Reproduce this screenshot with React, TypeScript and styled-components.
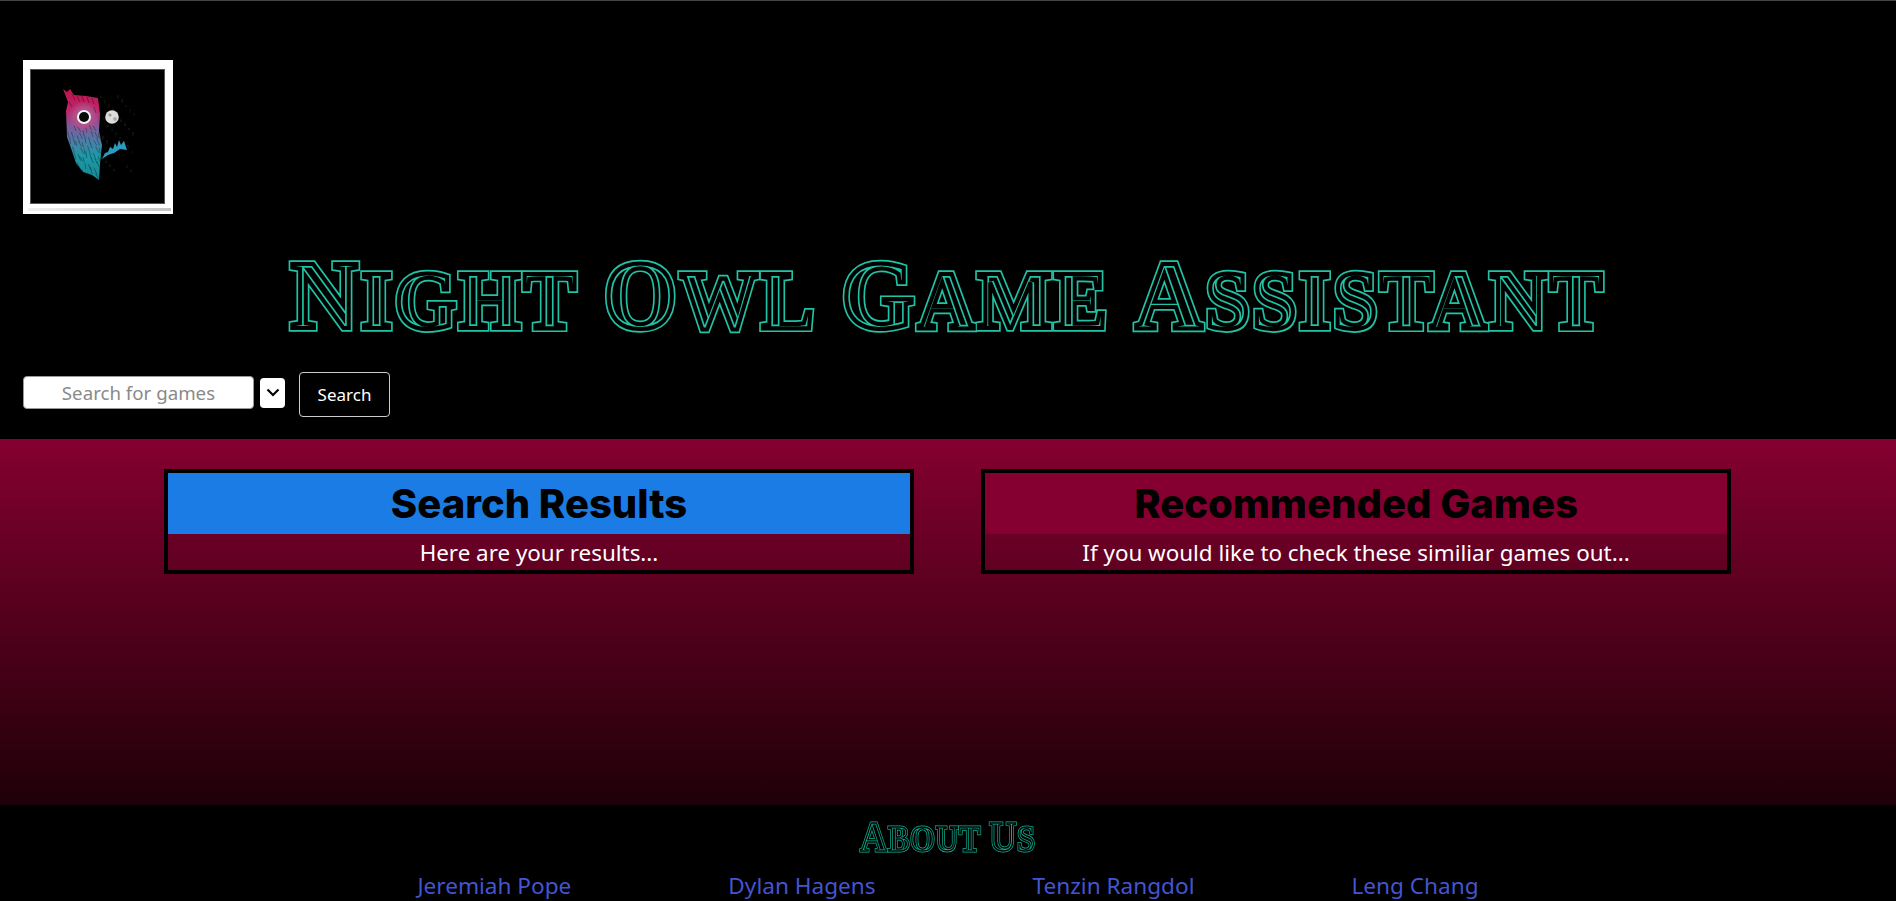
import React from 'react';
import styled, { createGlobalStyle } from 'styled-components';

const GlobalStyle = createGlobalStyle`
  html, body {
    margin: 0;
    padding: 0;
    height: 901px;
    overflow: hidden;
    background: #000;
    font-family: "Noto Sans", "Open Sans", sans-serif;
  }
`;

const Page = styled.div`
  display: flex;
  flex-direction: column;
  height: 901px;
`;

const Header = styled.header`
  height: 439px;
  box-sizing: border-box;
  background: #000;
  border-top: 1px solid #444;
  padding: 59px 23px 0;
`;

const Logo = styled.div`
  position: relative;
  width: 150px;
  height: 154px;
  box-sizing: border-box;
  background: #000;
  border-style: solid;
  border-color: #fff;
  border-width: 9px 8px 10px 7px;
  box-shadow: inset 0 0 0 1px #555;
  svg {
    display: block;
    width: 135px;
    height: 135px;
    filter: blur(0.45px);
  }
  &::after {
    content: '';
    position: absolute;
    left: -2px;
    right: -6px;
    bottom: -7px;
    height: 3px;
    background: linear-gradient(90deg, #f0f0f0, #c4c4c4);
  }
`;

const Title = styled.h1`
  --outer: 7.6px;
  --inner: 4.2px;
  margin: 36px 0 0;
  height: 98px;
  display: flex;
  justify-content: center;
  align-items: flex-end;
  gap: 26px;
  font: 700 82px/94px "Liberation Serif", serif;
  letter-spacing: 3.5px;
  color: #22c2a6;
  transform: scaleX(0.955);
`;

const AboutTitle = styled.h2`
  --outer: 3px;
  --inner: 1.5px;
  margin: 0;
  height: 44px;
  display: flex;
  justify-content: center;
  align-items: flex-end;
  gap: 9px;
  font: 700 35px/43px "Liberation Serif", serif;
  letter-spacing: 1px;
  color: #10b092;
  transform: scaleX(0.9);
`;

const Word = styled.span`
  display: inline-flex;
  align-items: baseline;
`;

const Glyphs = styled.span<{ $big?: boolean }>`
  position: relative;
  display: inline-block;
  font-size: ${(p) => (p.$big ? '1.19em' : '1em')};
  text-transform: uppercase;
  white-space: pre;
  -webkit-text-fill-color: #000;
  -webkit-text-stroke: var(--outer) currentColor;
  &::before {
    content: attr(data-text);
    position: absolute;
    left: 0;
    top: 0;
    -webkit-text-fill-color: transparent;
    -webkit-text-stroke: var(--inner) #000;
  }
`;

const SearchRow = styled.form`
  display: flex;
  align-items: center;
  margin-top: 24px;
  height: 45px;
`;

const SearchInput = styled.input`
  width: 231px;
  height: 33px;
  margin-top: -4px;
  box-sizing: border-box;
  background: #fff;
  border: 1px solid #999;
  border-radius: 4px;
  padding: 0;
  text-align: center;
  font: 18.7px "Noto Sans", sans-serif;
  &::placeholder {
    color: #8a8a8a;
  }
`;

const SelectBox = styled.div`
  width: 25px;
  height: 30px;
  margin-left: 6px;
  margin-top: -4px;
  box-sizing: border-box;
  display: flex;
  align-items: center;
  justify-content: center;
  background: #fff;
  border-radius: 4px;
  color: #000;
`;

const SearchButton = styled.button`
  width: 91px;
  height: 45px;
  margin-left: 14px;
  box-sizing: border-box;
  background: #000;
  border: 1px solid #ccc;
  border-radius: 4px;
  color: #fff;
  font: 17px "Noto Sans", sans-serif;
  padding: 0;
`;

const Results = styled.main`
  height: 366px;
  box-sizing: border-box;
  padding: 30px 165px 0 164px;
  display: grid;
  grid-template-columns: 750px 750px;
  justify-content: space-between;
  align-items: start;
  background: linear-gradient(#850030, #1f0008);
`;

const Panel = styled.section`
  border: 4px solid #000;
  height: 105px;
  box-sizing: border-box;
`;

const PanelHeading = styled.h2<{ $color: string }>`
  margin: 0;
  height: 61px;
  background: ${(p) => p.$color};
  color: #000;
  text-align: center;
  font: 800 40px/61px Inter, sans-serif;
`;

const PanelText = styled.p`
  margin: 0;
  height: 36px;
  color: #fff;
  text-align: center;
  font: 22.4px/37px "Noto Sans", sans-serif;
`;

const Footer = styled.footer`
  flex: 1;
  background: #000;
  padding-top: 12px;
  overflow: hidden;
`;

const Names = styled.div`
  display: flex;
  justify-content: center;
  gap: 157px;
  margin-top: 10px;
`;

const Name = styled.a`
  color: #4355d0;
  font: 22.6px/30px "Noto Sans", sans-serif;
`;

const stars = Array.from({ length: 60 }, (_, i) => ({
  x: 71 + ((i * 37) % 34),
  y: 26 + ((i * 23) % 78),
  o: 0.1 + ((i * 7) % 5) * 0.07,
}));

// uneven short dark strokes, so the body reads as plumage
const feathers = Array.from({ length: 11 }, (_, row) =>
  Array.from({ length: 7 }, (_, col) => {
    const x = 36 + col * 5.4 + ((row * 7 + col * 3) % 5) * 0.9;
    const y = 56 + row * 5.2 + ((row + col * 5) % 4) * 0.9;
    return `M${x} ${y} l${1 + (col % 3)} ${5 + (row % 3)}`;
  }),
).flat();

const crown = ['M42 25 l3 6', 'M47 27 l3 6', 'M52 27 l2 6', 'M57 28 l2 6', 'M62 29 l2 6', 'M39 33 l3 5', 'M64 38 l2 6'];

const OwlArt = () => (
  <svg viewBox="0 0 135 135" aria-hidden="true">
    <defs>
      <linearGradient id="owl" x1="0" y1="0" x2="0" y2="1">
        <stop offset="0" stopColor="#b8144a" />
        <stop offset="0.25" stopColor="#c0246a" />
        <stop offset="0.42" stopColor="#7d5c9c" />
        <stop offset="0.58" stopColor="#4a7fa8" />
        <stop offset="0.72" stopColor="#1f98a8" />
        <stop offset="1" stopColor="#128a94" />
      </linearGradient>
      <radialGradient id="disc">
        <stop offset="0.55" stopColor="#b0508c" />
        <stop offset="1" stopColor="#b0508c" stopOpacity="0" />
      </radialGradient>
      <clipPath id="body">
        <path d="M33 20 L37 23 L40 20 L44 26 L56 27 L68 29 L70 45 L69 62 L72 76 L70 95 L69 111 L62 106 L53 103 L46 94 L42 82 L37 68 L36 42 L38 33 Z" />
      </clipPath>
    </defs>
    <g clipPath="url(#body)">
      <rect x="30" y="18" width="46" height="95" fill="url(#owl)" />
      <circle cx="54" cy="48" r="16" fill="url(#disc)" />
      {feathers.concat(crown).map((d) => (
        <path key={d} d={d} stroke="#000" strokeWidth="0.8" opacity="0.4" />
      ))}
    </g>
    <circle cx="54" cy="48" r="7" fill="#f4f4f4" />
    <circle cx="54" cy="48" r="5" fill="#0a0a0a" />
    {stars.map((s) => (
      <circle key={`${s.x}-${s.y}`} cx={s.x} cy={s.y} r="0.5" fill="#fff" opacity={s.o} />
    ))}
    <circle cx="82" cy="48" r="6.8" fill="#dcdcdc" />
    <circle cx="80" cy="46" r="1.6" fill="#9a9a9a" />
    <circle cx="85" cy="50" r="2" fill="#ababab" />
    <path
      d="M72 90 L75 84 L78 83 L80 78 L83 80 L85 74 L87 78 L89 71 L91 76 L94 72 L97 81 L90 80 L84 84 L78 86 Z"
      fill="#2a9cc0"
    />
  </svg>
);

const OutlineWord = ({ text }: { text: string }) => (
  <Word>
    <Glyphs $big data-text={text[0]}>{text[0]}</Glyphs>
    <Glyphs data-text={text.slice(1)}>{text.slice(1)}</Glyphs>
  </Word>
);

const App = () => (
  <Page>
    <GlobalStyle />
    <Header>
      <Logo>
        <OwlArt />
      </Logo>
      <Title>
        {['Night', 'Owl', 'Game', 'Assistant'].map((w) => (
          <OutlineWord key={w} text={w} />
        ))}
      </Title>
      <SearchRow onSubmit={(e) => e.preventDefault()}>
        <SearchInput placeholder="Search for games" />
        <SelectBox>
          <svg width="14" height="9" viewBox="0 0 14 9" fill="none" stroke="#000" strokeWidth="2.2">
            <path d="M1.5 1.5 L7 7 L12.5 1.5" />
          </svg>
        </SelectBox>
        <SearchButton>Search</SearchButton>
      </SearchRow>
    </Header>
    <Results>
      <Panel>
        <PanelHeading $color="#1c7ce5">Search Results</PanelHeading>
        <PanelText>Here are your results...</PanelText>
      </Panel>
      <Panel>
        <PanelHeading $color="#850030">Recommended Games</PanelHeading>
        <PanelText>If you would like to check these similiar games out...</PanelText>
      </Panel>
    </Results>
    <Footer>
      <AboutTitle>
        <OutlineWord text="About" />
        <OutlineWord text="Us" />
      </AboutTitle>
      <Names>
        <Name>Jeremiah Pope</Name>
        <Name>Dylan Hagens</Name>
        <Name>Tenzin Rangdol</Name>
        <Name>Leng Chang</Name>
      </Names>
    </Footer>
  </Page>
);

export default App;
